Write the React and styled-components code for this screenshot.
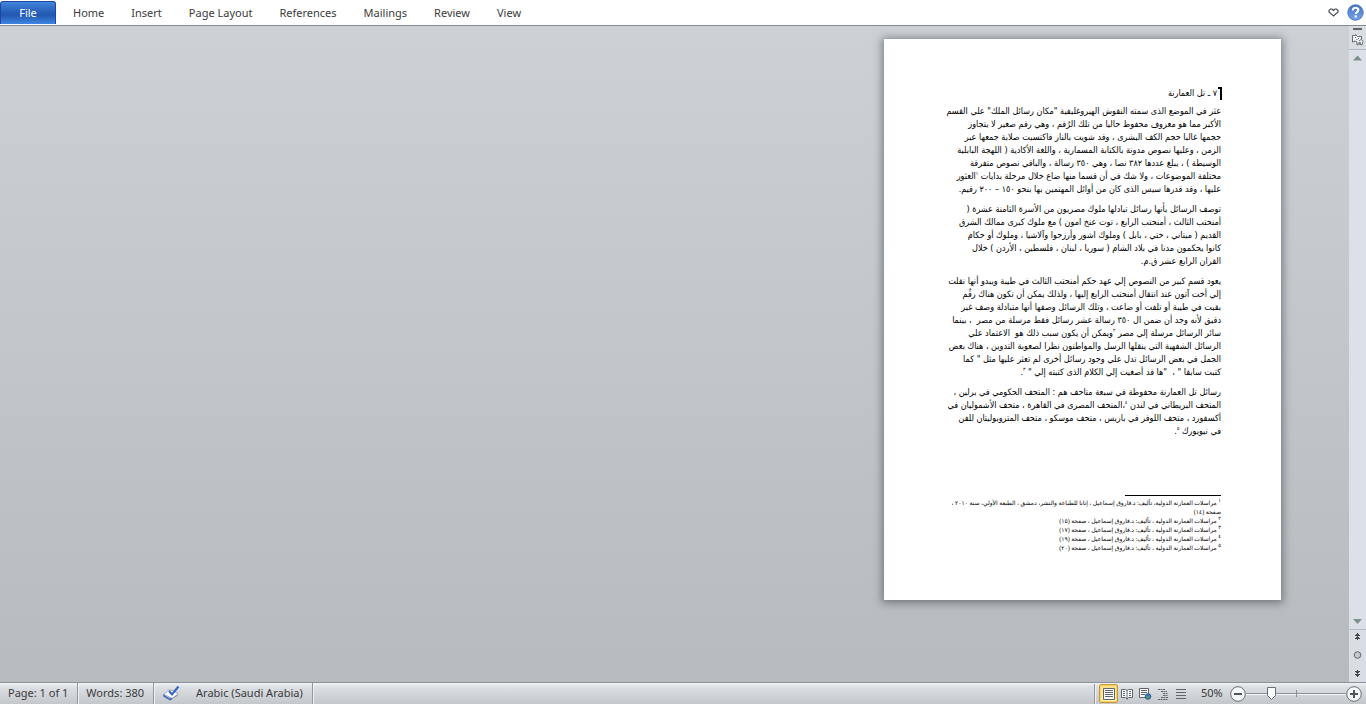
import React, { useState } from 'react';
import styled, { createGlobalStyle, css } from 'styled-components';

const GlobalStyle = createGlobalStyle`
  * {
    box-sizing: border-box;
  }
  body {
    margin: 0;
    font-family: 'Noto Sans', 'Open Sans', sans-serif;
    font-size: 11px;
    color: #3b3b3b;
  }
  button {
    font: inherit;
    color: inherit;
    border: 0;
    padding: 0;
    background: none;
  }
`;

const Window = styled.div`
  display: flex;
  flex-direction: column;
  min-height: 100vh;
`;

/* Ribbon */

const Ribbon = styled.header`
  display: flex;
  align-items: stretch;
  height: 26px;
  background: #fff;
  border-bottom: 1px solid #848d93;
`;

const Tabs = styled.nav`
  display: flex;
  flex: 1;
  padding-top: 1px;
`;

const Tab = styled.button`
  padding: 0 14px 0 13px;
  line-height: 24px;
  white-space: nowrap;
`;

const FileTab = styled(Tab)`
  width: 56px;
  height: 23px;
  margin-right: 4px;
  padding: 0;
  color: #fff;
  border: 1px solid #1e48a0;
  border-bottom: 0;
  border-radius: 3px 3px 0 0;
  line-height: 22px;
  background: linear-gradient(#4385dc 0, #2a64bd 40%, #2259b0 60%, #3f86e4 100%);
`;

const RibbonTools = styled.div`
  display: flex;
  align-items: center;
  gap: 8px;
  padding: 0 2px 1px 0;
`;

const IconButton = styled.button`
  display: flex;
  align-items: center;
  justify-content: center;
`;

/* Document */

const Workspace = styled.main`
  display: flex;
  flex: 1;
  background: linear-gradient(#cdd1d6, #b7babe);
`;

const Canvas = styled.div`
  display: flex;
  flex: 1;
  justify-content: flex-end;
  align-items: flex-start;
  padding: 13px 68px 32px;
`;

const Sheet = styled.article`
  display: flex;
  flex-direction: column;
  justify-content: space-between;
  width: 397px;
  min-height: 561px;
  padding: 48px 60px 47px;
  background: #fff;
  color: #000;
  direction: rtl;
  box-shadow: 0 1px 8px 2px rgba(70, 75, 82, 0.6);
  font-family: 'DejaVu Sans Condensed', 'DejaVu Sans', sans-serif;
`;

const Heading = styled.h1`
  position: relative;
  margin: 0 0 5px;
  padding-right: 4px;
  font-size: 9px;
  font-weight: 400;
  line-height: 13px;
`;

const Caret = styled.span`
  position: absolute;
  top: 0;
  right: -1px;
  width: 4px;
  height: 13px;
  border-top: 2px solid #000;
  border-right: 2px solid #000;
`;

const Paragraph = styled.p`
  margin: 0 0 7px;
  font-size: 9px;
  line-height: 13px;
`;

const Line = styled.span`
  display: block;
  white-space: nowrap;
`;

const Mark = styled.sup`
  font-size: 5px;
  line-height: 0;
`;

const Footnotes = styled.footer`
  font-family: 'Liberation Serif', 'DejaVu Sans', sans-serif;
  font-size: 6px;
  line-height: 9px;
`;

const FootRule = styled.hr`
  width: 96px;
  height: 1px;
  margin: 0 0 3px auto;
  margin-right: 0;
  border: 0;
  background: #000;
`;

const Note = styled.p`
  margin: 0;
`;

/* Scroll bar */

const ScrollBar = styled.aside`
  display: flex;
  flex-direction: column;
  align-items: center;
  width: 17px;
  background: #dce0e8;
`;

const ScrollEnd = styled.div`
  display: flex;
  flex-direction: column;
  align-items: center;
  width: 100%;
  background: #d9dde4;
  ${p => (p.$top
    ? css`
        gap: 3px;
        padding: 2px 0 3px;
        border-bottom: 1px solid #b4bac4;
      `
    : css`
        gap: 10px;
        padding: 3px 0 5px;
        border-top: 1px solid #b4bac4;
      `)}
`;

const ScrollTrack = styled.div`
  display: flex;
  flex: 1;
  flex-direction: column;
  justify-content: space-between;
  padding: 5px 0 4px;
`;

/* Status bar */

const StatusBar = styled.footer`
  display: flex;
  align-items: stretch;
  justify-content: space-between;
  height: 22px;
  border-top: 1px solid #8c9299;
  background: linear-gradient(#f0f2f4 0, #dcdfe3 20%, #c3c7cc 100%);
`;

const StatusGroup = styled.div`
  display: flex;
  align-items: center;
`;

const ViewTools = styled(StatusGroup)`
  padding-right: 4px;
`;

const StatusItem = styled.button`
  display: flex;
  align-items: center;
  height: 21px;
  padding: 0 9px 2px 8px;
  border-right: 1px solid #92979e;
  box-shadow: 1px 0 0 #eef0f2;
  white-space: nowrap;
`;

const LanguageItem = styled(StatusItem)`
  padding-left: 16px;
`;

const ProofButton = styled(IconButton)`
  width: 26px;
  padding: 0 0 2px 8px;
`;

const Grip = styled.span`
  width: 2px;
  height: 20px;
  margin-right: 3px;
  border-left: 1px solid #92979e;
  border-right: 1px solid #eef0f2;
`;

const ViewButton = styled(IconButton)`
  width: 18px;
  height: 19px;
  ${p => p.$active && css`
    width: 19px;
    border: 1px solid #c79a34;
    border-radius: 2px;
    background: linear-gradient(#fbe08a, #fff3b4);
    box-shadow: inset 0 0 0 1px #f8cf62;
  `}
`;

const ZoomLevel = styled.button`
  width: 40px;
  padding: 0 0 2px 11px;
  text-align: left;
`;

const Slider = styled.label`
  position: relative;
  display: flex;
  width: 100px;
  height: 20px;
`;

const SliderInput = styled.input`
  position: absolute;
  inset: 0;
  width: 100%;
  margin: 0;
  opacity: 0;
`;

const RulerIcon = () => (
  <svg width="13" height="13" viewBox="0 0 13 13" fill="#f2f3f5" stroke="#666b70">
    <path d="M1.500 2.500h3v-1l2 2h4v3l1.500 2-1 3.500-3-1-2 1v-3l-2-1-2.500 1z" />
    <path d="M4 4.500h1M7 5.500h1M5.500 7l1-1M8 8l2-1.500M7 10h3M9 9v2" />
  </svg>
);

const Triangle = ({ down }) => (
  <svg width="17" height="6" viewBox="0 0 17 6" fill="#7d918d">
    <path d={down ? 'M4 0h9L8.500 5z' : 'M4 5.500h9L8.500 0.500z'} />
  </svg>
);

const DoubleArrow = ({ down }) => (
  <svg width="7" height="8" viewBox="0 0 7 8" stroke="#45494e" shapeRendering="crispEdges">
    <g transform={down ? 'matrix(1 0 0 -1 0 8)' : undefined}>
      <path d="M3 0.500h1M2 1.500h3M1 2.500h5M3 3.500h1M2 4.500h3M1 5.500h5M3 6.500h1" />
    </g>
  </svg>
);

const HeartIcon = () => (
  <svg width="11" height="9" viewBox="0 0 11 9" fill="#fff" stroke="#4c5055" strokeWidth="1.200">
    <path d="M5.500 2.500L4 1H2.500L1 2.500V4l4.500 4L10 4V2.500L8.500 1H7z" />
  </svg>
);

const HelpIcon = () => (
  <svg width="17" height="17" viewBox="0 0 17 17">
    <defs>
      <linearGradient id="help" x2="0" y2="1">
        <stop offset="0" stopColor="#3f6fc7" />
        <stop offset="1" stopColor="#76a6ee" />
      </linearGradient>
    </defs>
    <circle cx="8.500" cy="8.500" r="7.700" fill="url(#help)" stroke="#4a74b8" />
    <path d="M5.800 6.600c0-3.800 5.600-3.600 5.600-.5 0 2-2.700 2.100-2.700 4" fill="none" stroke="#fff" strokeWidth="2" />
    <rect x="7.600" y="11.300" width="2.200" height="2.200" fill="#fff" />
  </svg>
);

const ProofIcon = () => (
  <svg width="17" height="16" viewBox="0 0 17 16">
    <path d="M1 9.500L5.500 5l4.500.5 5 3-5.500 5z" fill="#fff" stroke="#9fa9b8" />
    <path d="M1 9.500v1.500l6 3.500 2-1" fill="none" stroke="#3f6cb8" strokeWidth="1.600" />
    <path d="M9 13.500l6-3.500" fill="none" stroke="#8d97a6" />
    <path d="M6 6l3 3.500 6.500-8" fill="none" stroke="#2f66c8" strokeWidth="2" />
  </svg>
);

const viewIcons = {
  print: (
    <>
      <path d="M1.500 1.500h11v11h-11z" fill="#fff" />
      <path d="M3 3.500h8M3 5.500h8M3 7.500h8M3 9.500h8" />
    </>
  ),
  reading: (
    <>
      <path d="M1.500 2.500h4l1.500 1 1.500-1h4v8h-4l-1.500 1.500-1.500-1.500h-4z" fill="#fff" />
      <path d="M7 3.500v9M3 4.500h2M3 6.500h2M3 8.500h2M9 4.500h2M9 6.500h2M9 8.500h2" />
    </>
  ),
  web: (
    <>
      <path d="M1.500 1.500h9v9h-9z" fill="#fff" />
      <path d="M3 3.500h6M3 5.500h6M3 7.500h4" />
      <circle cx="10" cy="9.500" r="2.800" fill="#3f78b8" stroke="#2e5f98" />
      <path d="M9 9.500l2 .5-1 1.500z" fill="#58a05a" stroke="#58a05a" />
    </>
  ),
  outline: <path d="M2 2.500h7M5 4.500h6M7 6.500h5M7 8.500h5M5 10.500h7M2 12.500h10" strokeDasharray="2 0.500" />,
  draft: <path d="M2 2.500h10M2 5.500h10M2 8.500h10M2 11.500h10" />,
};

const ViewIcon = ({ kind }) => (
  <svg width="14" height="14" viewBox="0 0 14 14" fill="none" stroke="#60656b">
    {viewIcons[kind]}
  </svg>
);

const ZoomIcon = ({ plus }) => (
  <svg width="16" height="16" viewBox="0 0 16 16">
    <circle cx="8" cy="8" r="7.300" fill="#f6f7f8" stroke="#686e76" />
    <path d={plus ? 'M4 8h8M8 4v8' : 'M4 8h8'} stroke="#50555b" strokeWidth="2" />
  </svg>
);

const tabs = ['Home', 'Insert', 'Page Layout', 'References', 'Mailings', 'Review', 'View'];

const paragraphs = [
  [
    'عثر في الموضع الذى سمته النقوش الهيروغليفية "مكان رسائل الملك" علي القسم',
    'الأكبر مما هو معروف محفوظ حاليا من تلك الرٌقم ، وهي رقم صغير لا يتجاوز',
    'حجمها غالبا حجم الكف البشرى ، وقد شويت بالنار فاكتسبت صلابة جمعها عبر',
    'الزمن ، وعليها نصوص مدونة بالكتابة المسمارية ، واللغة الأكادية ( اللهجة البابلية',
    'الوسيطة ) ، يبلغ عددها ٣٨٢ نصا ، وهي ٣٥٠ رسالة ، والباقي نصوص متفرقة',
    <>مختلفة الموضوعات ، ولا شك في أن قسما منها ضاع خلال مرحلة بدايات <Mark>١</Mark>العثور</>,
    'عليها ، وقد قدرها سيس الذى كان من أوائل المهتمين بها بنحو ١٥٠ – ٢٠٠ رقيم.',
  ],
  [
    'توصف الرسائل بأنها رسائل تبادلها ملوك مصريون من الأسرة الثامنة عشرة (',
    'أمنحتب الثالث ، أمنحتب الرابع ، توت عنخ امون ) مع ملوك كبرى ممالك الشرق',
    'القديم ( ميتاني ، ختي ، بابل ) وملوك اشور وأرزحوا وآلاشيا ، وملوك أو حكام',
    'كانوا يحكمون مدنا في بلاد الشام ( سوريا ، لبنان ، فلسطين ، الأردن ) خلال',
    'القران الرابع عشر ق.م.',
  ],
  [
    'يعود قسم كبير من النصوص إلي عهد حكم أمنحتب الثالث في طيبة ويبدو أنها نقلت',
    'إلي أخت آتون عند انتقال أمنحتب الرابع إليها ، ولذلك يمكن أن تكون هناك رقٌم',
    'بقيت في طيبة أو تلفت أو ضاعت ، وتلك الرسائل وصفها أنها متبادلة وصف غير',
    'دقيق لأنه وجد أن ضمن ال ٣٥٠ رسالة عشر رسائل فقط مرسلة من مصر \u00a0، بينما',
    <>سائر الرسائل مرسلة إلي مصر <Mark>٢</Mark>ويمكن أن يكون سبب ذلك هو {'\u00a0'}الاعتماد علي</>,
    'الرسائل الشفهية التي ينقلها الرسل والمواطنون نظرا لصعوبة التدوين ، هناك بعض',
    'الجمل في بعض الرسائل تدل علي وجود رسائل أخرى لم تعثر عليها مثل " كما',
    <>كتبت سابقا " ، {'\u00a0'}"ها قد أصغيت إلي الكلام الذى كتبته إلي " <Mark>٣</Mark>.</>,
  ],
  [
    'رسائل تل العمارنة محفوظة في سبعة متاحف هم : المتحف الحكومي في برلين ،',
    <>المتحف البريطاني في لندن <Mark>٤</Mark>،المتحف المصرى في القاهرة ، متحف الأشموليان في</>,
    'أكسفورد ، متحف اللوفر في باريس ، متحف موسكو ، متحف المتروبوليتان للفن',
    <>في نيويورك <Mark>٥</Mark>.</>,
  ],
];

const notes = [
  ['٢', '١٥'],
  ['٣', '١٧'],
  ['٤', '١٩'],
  ['٥', '٢٠'],
];

const views = [
  ['print', 'Print Layout'],
  ['reading', 'Full Screen Reading'],
  ['web', 'Web Layout'],
  ['outline', 'Outline'],
  ['draft', 'Draft'],
];

function ZoomSlider({ value, onChange }) {
  // the tick in the middle of the track is 100%
  const x = Math.round(value / 2);
  return (
    <Slider>
      <svg width="100" height="20" viewBox="0 0 100 20">
        <path d="M0 9.500h100" stroke="#8a9199" />
        <path d="M0 10.500h100" stroke="#f2f4f6" />
        <path d="M50.500 6v7" stroke="#8a9199" />
        <path
          d={`M${x - 3.5} 3.500h8v8l-4 4-4-4z`}
          fill="#fafbfc"
          stroke="#686e76"
        />
      </svg>
      <SliderInput
        type="range"
        min="0"
        max="200"
        value={value}
        aria-label="Zoom"
        onChange={e => onChange(Number(e.target.value))}
      />
    </Slider>
  );
}

function App() {
  const [view, setView] = useState('print');
  const [zoom, setZoom] = useState(50);

  return (
    <Window>
      <GlobalStyle />
      <Ribbon>
        <Tabs>
          <FileTab>File</FileTab>
          {tabs.map(name => <Tab key={name}>{name}</Tab>)}
        </Tabs>
        <RibbonTools>
          <IconButton aria-label="Expand the Ribbon"><HeartIcon /></IconButton>
          <IconButton aria-label="Help"><HelpIcon /></IconButton>
        </RibbonTools>
      </Ribbon>

      <Workspace>
        <Canvas>
          <Sheet lang="ar">
            <div>
              <Heading>
                <Caret />
                ٧ ـ تل العمارنة
              </Heading>
              {paragraphs.map((lines, i) => (
                <Paragraph key={i}>
                  {lines.map((line, j) => <Line key={j}>{line}</Line>)}
                </Paragraph>
              ))}
            </div>
            <Footnotes>
              <FootRule />
              <Note>
                <Line>
                  <Mark>١</Mark> مراسلات العمارنة الدولية، تأليف: د.فاروق إسماعيل ، إنانا للطباعة والنشر، دمشق ، الطبعة الأولي، سنة ٢٠١٠ ،
                </Line>
                <Line>صفحة (١٤)</Line>
              </Note>
              {notes.map(([mark, page]) => (
                <Note key={mark}>
                  <Mark>{mark}</Mark> مراسلات العمارنة الدولية ، تأليف: د.فاروق إسماعيل ، صفحة ({page})
                </Note>
              ))}
            </Footnotes>
          </Sheet>
        </Canvas>
        <ScrollBar>
          <ScrollEnd $top>
            <IconButton aria-label="Split">
              <svg width="9" height="2"><rect width="9" height="2" fill="#62676d" /></svg>
            </IconButton>
            <IconButton aria-label="View Ruler"><RulerIcon /></IconButton>
          </ScrollEnd>
          <ScrollTrack>
            <IconButton aria-label="Scroll up"><Triangle /></IconButton>
            <IconButton aria-label="Scroll down"><Triangle down /></IconButton>
          </ScrollTrack>
          <ScrollEnd>
            <IconButton aria-label="Previous Page"><DoubleArrow /></IconButton>
            <IconButton aria-label="Select Browse Object">
              <svg width="9" height="8" viewBox="0 0 9 8">
                <circle cx="4.500" cy="4" r="3.300" fill="#c6cad0" stroke="#62676d" />
              </svg>
            </IconButton>
            <IconButton aria-label="Next Page"><DoubleArrow down /></IconButton>
          </ScrollEnd>
        </ScrollBar>
      </Workspace>

      <StatusBar>
        <StatusGroup>
          <StatusItem>Page: 1 of 1</StatusItem>
          <StatusItem>Words: 380</StatusItem>
          <ProofButton aria-label="Proofing"><ProofIcon /></ProofButton>
          <LanguageItem>Arabic (Saudi Arabia)</LanguageItem>
        </StatusGroup>
        <ViewTools>
          <Grip />
          {views.map(([kind, label]) => (
            <ViewButton
              key={kind}
              aria-label={label}
              $active={view === kind}
              onClick={() => setView(kind)}
            >
              <ViewIcon kind={kind} />
            </ViewButton>
          ))}
          <ZoomLevel>{zoom}%</ZoomLevel>
          <IconButton aria-label="Zoom Out" onClick={() => setZoom(Math.max(10, zoom - 10))}>
            <ZoomIcon />
          </IconButton>
          <ZoomSlider value={zoom} onChange={setZoom} />
          <IconButton aria-label="Zoom In" onClick={() => setZoom(Math.min(200, zoom + 10))}>
            <ZoomIcon plus />
          </IconButton>
        </ViewTools>
      </StatusBar>
    </Window>
  );
}

export default App;
